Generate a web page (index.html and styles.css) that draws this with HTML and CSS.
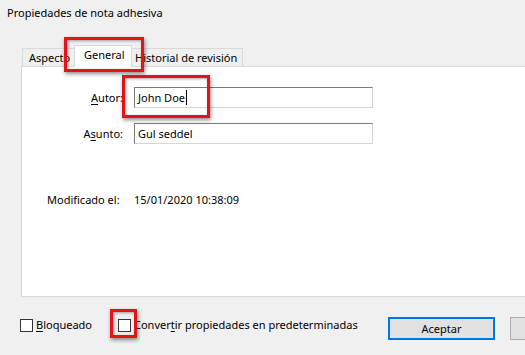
FILE: index.html
```html
<!DOCTYPE html>
<html>
<head>
<meta charset="utf-8">
<link rel="stylesheet" href="styles.css">
</head>
<body>
<div class="dialog">
  <div class="title">Propiedades de nota adhesiva</div>
  <div class="tabs">
    <div class="tab tab-aspecto">Aspecto</div>
    <div class="tab tab-general active">General</div>
    <div class="tab tab-hist">Historial de revisión</div>
  </div>
  <div class="panel">
    <div class="form">
      <label class="lbl"><u>A</u>utor:</label>
      <div class="input"><span>John Doe</span><span class="caret"></span></div>
      <label class="lbl">A<u>s</u>unto:</label>
      <div class="input"><span>Gul seddel</span></div>
    </div>
    <div class="modified">
      <span class="mod-lbl">Modificado el:</span>
      <span class="mod-val">15/01/2020 10:38:09</span>
    </div>
  </div>
  <div class="footer">
    <div class="check check-1"><span class="box"></span><span><u>B</u>loqueado</span></div>
    <div class="check check-2"><span class="box"></span><span>Conver<u>t</u>ir propiedades en predeterminadas</span></div>
    <div class="btn btn-ok">Aceptar</div>
    <div class="btn btn-cancel"></div>
  </div>
</div>
<div class="mark mark-tab"></div>
<div class="mark mark-autor"></div>
<div class="mark mark-check"></div>
</body>
</html>
```
FILE: styles.css
```css
html, body {
  margin: 0;
  padding: 0;
}
body {
  width: 525px;
  height: 355px;
  overflow: hidden;
  background: #f0f0f0;
  font-family: "Noto Sans", "Open Sans", sans-serif;
  font-size: 11px;
  color: #000;
  position: relative;
}
.dialog {
  width: 550px;
}
.title {
  height: 28px;
  box-sizing: border-box;
  padding: 5px 0 0 7px;
  line-height: 16px;
  font-size: 11px;
}
.tabs {
  display: flex;
  align-items: flex-end;
  height: 21px;
  margin-top: 17px;
  margin-left: 22px;
  position: relative;
  z-index: 2;
}
.tab {
  box-sizing: border-box;
  height: 18px;
  line-height: 17px;
  border: 1px solid #d9d9d9;
  border-bottom: none;
  background: #f0f0f0;
  padding-left: 6px;
  white-space: nowrap;
}
.tab-aspecto {
  width: 54px;
  border-right: none;
}
.tab-general {
  width: 58px;
  margin: 0 -2px 0 -2px;
  padding-left: 9px;
  position: relative;
  z-index: 1;
}
.tab.active {
  height: 22px;
  margin-bottom: -1px;
  background: #fff;
  line-height: 18px;
}
.tab-hist {
  width: 113px;
  padding-left: 5px;
  border-left: none;
}
.panel {
  box-sizing: border-box;
  height: 231px;
  margin-left: 21px;
  background: #fff;
  border: 1px solid #d9d9d9;
  position: relative;
  z-index: 1;
}
.form {
  display: grid;
  grid-template-columns: 101px 239px;
  column-gap: 11px;
  row-gap: 15px;
  align-items: center;
  padding-top: 20px;
}
.lbl {
  text-align: right;
  line-height: 16px;
}
.lbl u, .check u {
  text-decoration-thickness: 1px;
  text-underline-offset: 2px;
}
.input {
  box-sizing: border-box;
  height: 21px;
  border: 1px solid;
  border-color: #7a7a7a #d5d5d5 #d5d5d5 #7a7a7a;
  padding-left: 3px;
  line-height: 19px;
  display: flex;
  align-items: center;
}
.caret {
  display: inline-block;
  width: 1px;
  height: 15px;
  background: #000;
  margin-left: 1px;
}
.modified {
  display: flex;
  margin-top: 48px;
  line-height: 16px;
}
.mod-lbl {
  margin-left: 25px;
  width: 87px;
}
.footer {
  display: flex;
  align-items: flex-start;
  margin-top: 20px;
  height: 23px;
}
.check {
  display: flex;
  align-items: center;
  line-height: 16px;
  height: 16px;
}
.check-1 {
  margin-left: 20px;
}
.check-2 {
  margin-left: 26px;
}
.box {
  box-sizing: border-box;
  width: 13px;
  height: 13px;
  border: 1px solid #333;
  background: #fff;
  margin-right: 3px;
}
.btn {
  box-sizing: border-box;
  height: 23px;
  background: #e1e1e1;
  border: 1px solid #adadad;
  text-align: center;
  line-height: 21px;
}
.btn-ok {
  width: 107px;
  margin-left: auto;
  border: 2px solid #0078d7;
  line-height: 19px;
}
.btn-cancel {
  width: 40px;
  margin-left: 15px;
}
.mark {
  position: absolute;
  box-sizing: border-box;
  border: 3px solid #e3131a;
  box-shadow: 1px 2px 4px rgba(0, 0, 0, 0.45), inset 1px 1px 3px rgba(0, 0, 0, 0.35);
  z-index: 5;
}
.mark-tab {
  left: 64px;
  top: 37px;
  width: 80px;
  height: 35px;
}
.mark-autor {
  left: 122px;
  top: 75px;
  width: 88px;
  height: 43px;
}
.mark-check {
  left: 110px;
  top: 309px;
  width: 27px;
  height: 29px;
}
```
